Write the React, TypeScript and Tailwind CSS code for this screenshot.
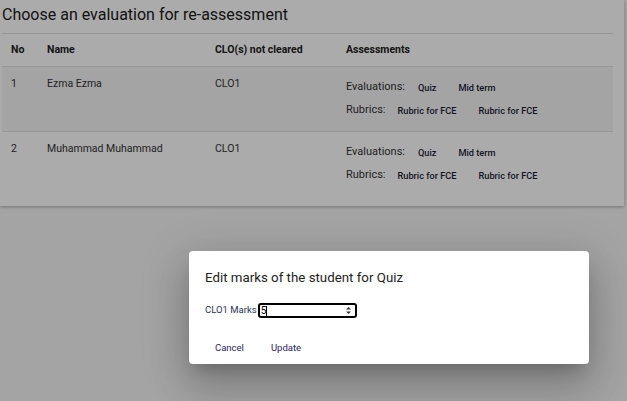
import * as React from 'react';

interface StudentRow {
  no: number;
  name: string;
  clo: string;
  evaluations: string[];
  rubrics: string[];
}

const ROWS: StudentRow[] = [
  { no: 1, name: 'Ezma Ezma', clo: 'CLO1', evaluations: ['Quiz', 'Mid term'], rubrics: ['Rubric for FCE', 'Rubric for FCE'] },
  { no: 2, name: 'Muhammad Muhammad', clo: 'CLO1', evaluations: ['Quiz', 'Mid term'], rubrics: ['Rubric for FCE', 'Rubric for FCE'] },
];

const COLS = 'grid grid-cols-[36px_168px_131px_1fr] pl-[9px]';

function LinkButton({ children }: { children: React.ReactNode }) {
  return (
    <button className="px-[11px] text-[9.2px] font-medium text-[#1c1c3a] leading-none">{children}</button>
  );
}

// little up/down spinner like the native number input
function Spinner() {
  return (
    <svg width="7" height="9" viewBox="0 0 7 9" className="shrink-0">
      <path d="M3.5 1 L6 3.5 L1 3.5 Z" fill="#333" />
      <path d="M3.5 8 L6 5.5 L1 5.5 Z" fill="#333" />
    </svg>
  );
}

export default function App() {
  return (
    <div className="relative w-[627px] h-[401px] overflow-hidden bg-[#f5f5f5] font-['Roboto',sans-serif]">
      {/* page underneath */}
      <div className="w-[624px] bg-white shadow-[0_1px_3px_rgba(0,0,0,0.3)] pb-[10px]">
        <h2 className="px-[2px] pt-[5px] h-[33px] text-[16px] text-[#202020] leading-[20px]">
          Choose an evaluation for re-assessment
        </h2>
        <div className="w-[611px] ml-[2px]">
          <div className={`${COLS} h-[33px] items-center border-t border-[#e0e0e0] text-[10.5px] font-bold text-[#222]`}>
            <span>No</span>
            <span>Name</span>
            <span>CLO(s) not cleared</span>
            <span>Assessments</span>
          </div>
          {ROWS.map((r, i) => (
            <div
              key={r.no}
              className={`${COLS} h-[65px] border-t border-[#e0e0e0] text-[10.5px] text-[#333] ${i === 0 ? 'bg-[#f5f5f5]' : ''}`}
            >
              <span className="pt-[9px]">{r.no}</span>
              <span className="pt-[9px]">{r.name}</span>
              <span className="pt-[9px]">{r.clo}</span>
              <div className="pt-[14px] flex flex-col gap-[10px]">
                <div className="flex items-center h-[13px]">
                  <span className="mr-[2px] text-[11px]">Evaluations:</span>
                  {r.evaluations.map((e, j) => (
                    <LinkButton key={j}>{e}</LinkButton>
                  ))}
                </div>
                <div className="flex items-center h-[13px]">
                  <span className="mr-[1px] text-[11px]">Rubrics:</span>
                  {r.rubrics.map((e, j) => (
                    <LinkButton key={j}>{e}</LinkButton>
                  ))}
                </div>
              </div>
            </div>
          ))}
        </div>
      </div>

      {/* backdrop */}
      <div className="absolute inset-0 bg-black/[0.33]" />

      {/* dialog */}
      <div className="absolute left-[189px] top-[251px] w-[400px] h-[113px] bg-white rounded-[4px] shadow-[0_11px_15px_-7px_rgba(0,0,0,0.2),0_24px_38px_3px_rgba(0,0,0,0.14),0_9px_46px_8px_rgba(0,0,0,0.12)] flex flex-col">
        <div className="px-[16px] pt-[19px] text-[13.3px] text-[#222] leading-[16px]">
          Edit marks of the student for Quiz
        </div>
        <div className="px-[16px] mt-[17px] flex items-center">
          <span className="text-[9.5px] text-[#2a3358] mr-[1px]">CLO1 Marks</span>
          <div className="w-[99px] h-[15px] border-2 border-black rounded-[3px] flex items-center pl-[1px] pr-[3px]">
            <span className="text-[10px] leading-none text-black">5</span>
            <span className="w-px h-[10px] bg-black" />
            <span className="flex-1" />
            <Spinner />
          </div>
        </div>
        <div className="pl-[26px] mt-[23px] flex gap-[27px] text-[9.5px] text-[#2b2460]">
          <button>Cancel</button>
          <button>Update</button>
        </div>
      </div>
    </div>
  );
}
